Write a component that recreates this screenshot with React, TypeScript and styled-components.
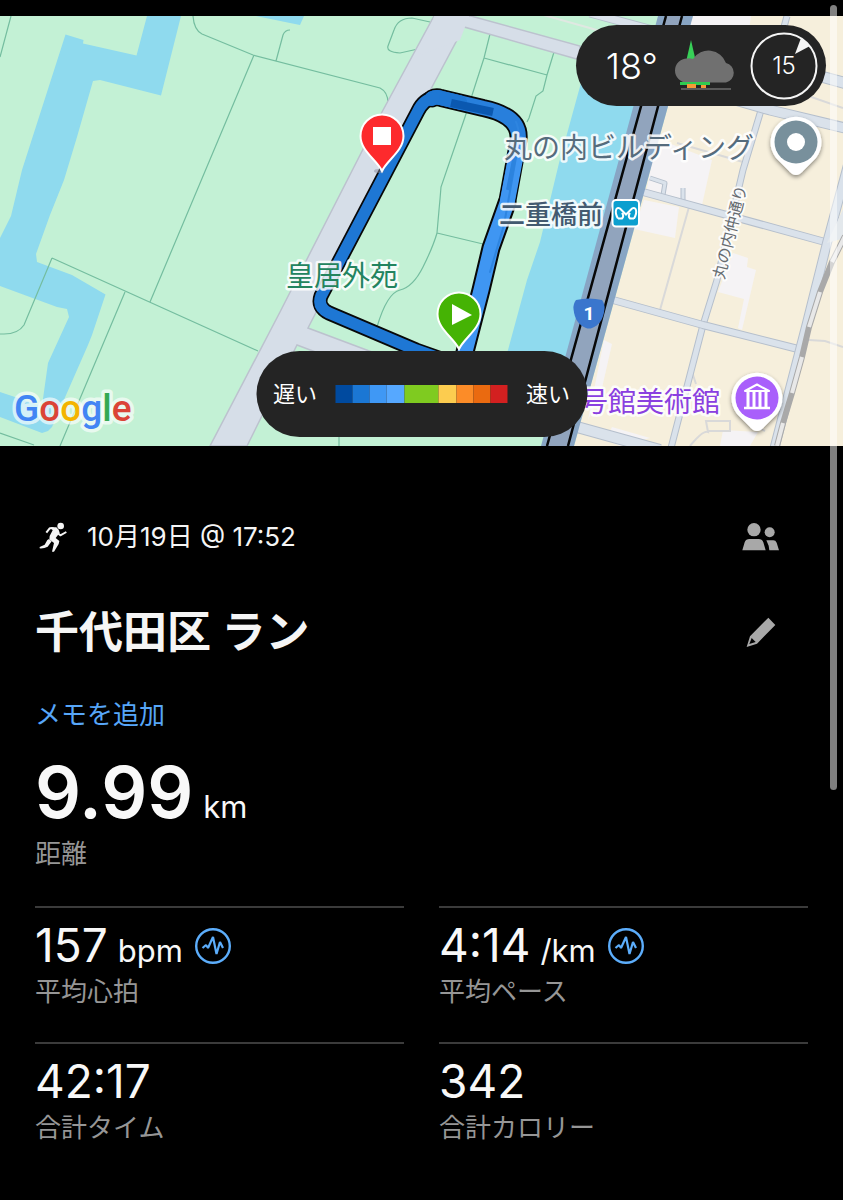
import React from 'react';
import styled, { createGlobalStyle } from 'styled-components';

const GlobalStyle = createGlobalStyle`
  *, *::before, *::after { box-sizing: border-box; }
  body {
    margin: 0;
    background: #000;
    color: #f5f5f5;
    font-family: Inter, "Noto Sans CJK JP", sans-serif;
  }
`;

const Page = styled.main`
  position: relative;
  min-height: 100vh;
  padding-top: 16px;
  padding-bottom: 36px;
  background: #000;
`;

const ScrollThumb = styled.div`
  position: absolute;
  top: 5px;
  right: 6px;
  width: 7px;
  height: 785px;
  border-radius: 4px;
  background: rgba(255, 255, 255, 0.5);
`;

const MapArea = styled.section`
  position: relative;
  overflow: hidden;
`;

const MapSvg = styled.svg`
  display: block;
  width: 100%;
  height: auto;
`;

const Pill = styled.div`
  position: absolute;
  display: flex;
  align-items: center;
  border-radius: 44px;
  background: #242424;
  color: #fff;
`;

const WeatherPill = styled(Pill)`
  top: 9px;
  right: 17px;
  height: 81px;
  padding: 0 8px 0 30px;
  gap: 14px;
`;

const LegendPill = styled(Pill)`
  bottom: 9px;
  left: 50%;
  height: 86px;
  padding: 0 17px;
  gap: 18px;
  transform: translateX(-50%);
  font-size: 22px;
  line-height: 32px;
  white-space: nowrap;
`;

const Temperature = styled.span`
  font-size: 36px;
  line-height: 44px;
  font-weight: 300;
`;

const WeatherIcon = styled.svg`
  width: 64px;
  height: 54px;
`;

const WindDial = styled.div`
  display: grid;
  place-items: center;
  width: 68px;
  height: 68px;
  font-size: 24px;
  line-height: 32px;
  font-weight: 300;

  > * { grid-area: 1 / 1; }
`;

const ColorScale = styled.div`
  display: flex;
  width: 173px;
  height: 18px;
`;

const ColorStep = styled.span<{ $color: string; $span: number }>`
  flex: ${(p) => p.$span};
  background: ${(p) => p.$color};
`;

const Details = styled.section`
  padding: 66px 35px 0;
`;

const HeaderRow = styled.div`
  display: flex;
  align-items: center;
  justify-content: space-between;
  height: 50px;
`;

const TitleRow = styled(HeaderRow)`
  height: 64px;
  margin-top: 38px;
`;

const DateLine = styled.div`
  display: flex;
  align-items: center;
  gap: 20px;
  padding-left: 4px;
  font-size: 26px;
  line-height: 36px;
`;

const Title = styled.h1`
  margin: 0;
  font-size: 44px;
  line-height: 64px;
  font-weight: 700;
`;

const IconButton = styled.button`
  display: grid;
  place-items: center;
  width: 48px;
  height: 48px;
  margin-right: 23px;
  padding: 0;
  border: 0;
  background: none;
  color: #a8a8a8;
  cursor: pointer;
`;

const NoteButton = styled.button`
  display: block;
  margin: 33px 0 0;
  padding: 0;
  border: 0;
  background: none;
  color: #57a6f8;
  font: inherit;
  font-size: 26px;
  line-height: 36px;
  cursor: pointer;
`;

const Stat = styled.div`
  display: flex;
  flex-direction: column-reverse;
  justify-content: flex-end;
`;

const MainStat = styled(Stat)`
  gap: 4px;
`;

const StatCell = styled(Stat)`
  padding-top: 9px;
  border-top: 2px solid #3b3b3b;
`;

const StatGrid = styled.dl`
  display: grid;
  grid-template-columns: 1fr 1fr;
  gap: 32px 35px;
  margin: 34px 0 0;
`;

const Summary = styled.dl`
  margin: 19px 0 0;
`;

const StatLabel = styled.dt`
  color: #969696;
  font-size: 26px;
  line-height: 36px;
  font-weight: 400;
`;

const StatValue = styled.dd<{ $large?: boolean }>`
  display: flex;
  align-items: baseline;
  gap: 10px;
  height: ${(p) => (p.$large ? 80 : 57)}px;
  margin: 0;
  color: #f8f8f8;
  font-size: ${(p) => (p.$large ? 72 : 46)}px;
  line-height: ${(p) => (p.$large ? 80 : 57)}px;
  font-weight: ${(p) => (p.$large ? 600 : 400)};
`;

const Unit = styled.span`
  font-size: 31px;
  line-height: 40px;
  font-weight: 400;
`;

const InfoButton = styled.button`
  align-self: center;
  width: 36px;
  height: 36px;
  margin-left: 2px;
  padding: 0;
  border: 0;
  background: none;
  line-height: 0;
  cursor: pointer;
`;

const paceColors = [
  { color: '#004a9f', span: 1 },
  { color: '#1b77d4', span: 1 },
  { color: '#3f98f5', span: 1 },
  { color: '#56a8ff', span: 1 },
  { color: '#7fcb20', span: 2 },
  { color: '#fccc4f', span: 1 },
  { color: '#fc8c28', span: 1 },
  { color: '#ea6a10', span: 1 },
  { color: '#d32020', span: 1 },
];

const Road = ({ d, w, fill = '#dae2eb', edge = '#b5bfcc' }: { d: string; w: number; fill?: string; edge?: string }) => (
  <g fill="none" strokeLinejoin="round">
    <path d={d} stroke={edge} strokeWidth={w + 2} />
    <path d={d} stroke={fill} strokeWidth={w} />
  </g>
);

const MapLabel = styled.text`
  font-family: "Noto Sans CJK JP", sans-serif;
  paint-order: stroke;
  stroke: #fff;
  stroke-opacity: 0.85;
  stroke-linejoin: round;
`;

const pinShape = 'M0 35C-5 24-21.5 15-21.5 0A21.5 21.5 0 0 1 21.5 0C21.5 15 5 24 0 35Z';
const placePin = 'M0 33Q-4 33-8 28L-20 16A25.5 25.5 0 1 1 20 16L8 28Q4 33 0 33Z';
const routeWest = 'M434 98Q424 99 418 111L386 172L321 296Q317 307 329 313L416 350L450 362';
const routeNorth = 'M432 98.500Q436 96.500 441 98L483 108Q521 116 518.500 140L507 203';

function RouteMap() {
  return (
    <MapSvg viewBox="0 16 843 430" role="img" aria-label="ルートマップ">
      <defs>
        <filter id="pinShadow" x="-30%" y="-30%" width="160%" height="170%">
          <feDropShadow dx="0" dy="2" stdDeviation="2" floodColor="#000" floodOpacity="0.45" />
        </filter>
      </defs>
      <rect y="16" width="843" height="430" fill="#c3f1d5" />

      <g fill="#8fdaee">
        <path d="M147 16H181L161 95.500L100 80L93 81L77 137L64 180L50 215L36 254L37 262L72 275L105.500 294.500L92 335L88 345L52 427L48 431L42 433L0 417V392L42 406L48 363L69 317L67 309L57 307L0 286V238L11 216L22 170L65.500 34.500L83.500 40L83 43.500L136.500 55.500Z" />
        <path d="M256 16L290 23L300 25L304 16Z" />
        <path d="M590 50L559 163L540 242L527 280L508 350L490 400H558L604 233L650 50Z" />
      </g>

      <g fill="none" stroke="#74bd9f" strokeWidth="1.200">
        <path d="M11 16L0 57M193 16Q194 30 202 34L253 55L380 88Q388 92 388 103M276 61L283 35Q285 30 290 30M254 55L150 302M52 258L258 351M52 258L24 325Q18 334 4 334H0M125 292L60 446M0 433L34 445" />
        <path d="M430 22L412 18Q398 18 394 30L388 46Q386 52 400 53L418 49M490 34L484 58L465 117L441 187Q440 200 439 210L437 233Q433 247 423 267T400 290T377 327M484 58L547 75M554 52L547 75L543 91L536 96L529 118L527 122M437 233L483 244M339 436V446" />
      </g>

      <path d="M434 16H471L580 46V60L464 27L432 87L308 328L420 370L416 390L297 345L247 446H210L280 312L382 112Z" fill="#d6dee8" stroke="#bcc2ce" strokeWidth="1.500" />
      <path d="M435 14H470L460 40L420 55Z" fill="#d6dee8" />
      <path d="M540 14L643 43" stroke="#e0e8e2" strokeWidth="2" />
      <Road d="M590 13L660 32" w={7} />

      <path d="M693 16H843V446H574Z" fill="#f6efdc" />
      <g fill="#f5f3f5">
        <path d="M693 16H751L749 30H688Z" />
        <path d="M653 157L666 142L712 160L702 205L646 193Z" />
        <path d="M644 200L679 207L675 238L634 229Z" />
        <path d="M733 253L748 258L747 267L756 270L742 330L738 328L744 299L718 292Z" />
        <path d="M604 340L612 344L602 388L588 420Z" />
        <path d="M723 430L758 432L750 446H720Z" />
        <path d="M612 427L650 438L620 446L606 440Z" />
      </g>
      <g fill="none" stroke="#d9d9d9" strokeWidth="2">
        <path d="M689 207L660 310M677 143L743 162M809 340L825 341L843 347M690 446Q703 430 708 432L706 421L730 421V431H708M745 421L765 431M780 86L843 108M692 372L696 384" />
      </g>
      <Road d="M787 16L762 107L743 170L717 280L703 325L671 448" w={5} />
      <Road d="M683 203V188M663 195L665 183L650 178" w={3} />
      <Road d="M643 192L825 242" w={6} />
      <Road d="M613 300L703 325L798 349" w={6} />
      <Road d="M577 427L660 450" w={10} />
      <Road d="M700 90L770 110L845 128" w={9} />
      <Road d="M700 40L823 77L845 83" w={10} />
      <Road d="M848 165L827 243L807 323L774 450" w={8} />
      <path d="M827 243L845 205L845 238Z" fill="#e3e8ec" />

      <path d="M845 236L832 262L820 292L809 327L802 357L792 393L783 423L777 446" fill="none" stroke="#a9a9a9" strokeWidth="6" />
      <path d="M845 236L832 262M820 292L809 327M802 357L792 393M783 423L777 446" fill="none" stroke="#e8e8e8" strokeWidth="4" />

      <path d="M658 16H693L574 446H541Z" fill="#88a5c4" />
      <path d="M666 16H682L568 446H547Z" fill="#91a4bd" />
      <path d="M666 16L547 446M682 16L568 446" stroke="#080808" strokeWidth="2.500" />

      <g fill="none" strokeLinejoin="round" strokeLinecap="round">
        <path d="M507 203L491 248L481 290L465 352" stroke="#080808" strokeWidth="19" />
        <path d={routeNorth} stroke="#080808" strokeWidth="18" />
        <path d={routeWest} stroke="#080808" strokeWidth="15" />
        <path d={routeNorth} stroke="#287fdc" strokeWidth="14.500" />
        <path d="M518.500 143L507 203L491 248L481 290L465 352" stroke="#3f96f2" strokeWidth="15" />
        <path d="M432 98.500Q436 96.500 441 98L460 102.500" stroke="#1e77d4" strokeWidth="14.500" />
        <path d={routeWest} stroke="#1e77d4" strokeWidth="11.500" />
        <path d="M451 103L493 112" stroke="#0b58b0" strokeWidth="8" strokeLinecap="butt" />
        <path d="M516 122Q520 130 518 146L504 225L490 272" stroke="#2e85e0" strokeWidth="2" />
        <path d="M515 155L508 190" stroke="#2c83de" strokeWidth="4" strokeLinecap="butt" />
      </g>

      <MapLabel x="286" y="286" fontSize="28" fill="#23845f" strokeWidth="5">皇居外苑</MapLabel>
      <MapLabel x="504" y="158" fontSize="28" fill="#566c7d" strokeWidth="5">丸の内ビルディング</MapLabel>
      <MapLabel x="499" y="224" fontSize="26" fontWeight="500" fill="#435a70" strokeWidth="5">二重橋前</MapLabel>
      <MapLabel x="720" y="412" fontSize="28" textAnchor="end" fill="#8a3fe0" strokeWidth="5">号館美術館</MapLabel>
      <MapLabel transform="translate(724 280) rotate(-76)" fontSize="16" fill="#666b70" strokeWidth="4">丸の内仲通り</MapLabel>

      <g transform="translate(382 136)">
        <ellipse cx="-3" cy="35" rx="5" ry="2" fill="#889" opacity="0.5" />
        <path d={pinShape} fill="#fd2a2d" stroke="#fff" strokeWidth="2" />
        <rect x="-9" y="-9" width="18" height="18" fill="#fff" />
      </g>
      <g transform="translate(459 314)">
        <path d={pinShape} fill="#45b304" stroke="#fff" strokeWidth="2" />
        <path d="M-7-10L13 1L-7 11Z" fill="#fff" />
      </g>

      <g transform="translate(796 142)">
        <path d={placePin} fill="#fff" filter="url(#pinShadow)" />
        <circle r="21.500" fill="#78909c" />
        <circle r="9" fill="#fff" />
      </g>
      <g transform="translate(757 398)">
        <path d={placePin} fill="#fff" filter="url(#pinShadow)" />
        <circle r="21.500" fill="#a95ffb" />
        <path d="M-12-7L0-13.500L12-7Z" fill="none" stroke="#fff" strokeWidth="2" strokeLinejoin="round" />
        <path d="M-9-6V9M-3-6V9M3-6V9M9-6V9" stroke="#fff" strokeWidth="3" />
        <path d="M-13 10H13" stroke="#fff" strokeWidth="2.500" />
      </g>

      <rect x="612.500" y="200" width="26.500" height="26.500" rx="3.500" fill="#0c9fcf" stroke="#fff" strokeWidth="2" />
      <path d="M618 218.500C614 212 616 206 620 208.500L626 214.500L632 208.500C636 206 638 212 634 218.500M618 218.500H622C623.500 217 623.500 215 622 213M634 218.500H630C628.500 217 628.500 215 630 213" fill="none" stroke="#fff" strokeWidth="2" />

      <path d="M576 300Q589 297 602 300Q605 304 604.500 309Q603 324 592 328Q589 329 586 328Q575 324 573.500 309Q573 304 576 300Z" fill="#3a76cd" />
      <text x="589" y="320" textAnchor="middle" fontFamily="Roboto, sans-serif" fontSize="19" fontWeight="700" fill="#fff">1</text>

      <text x="14" y="421" fontFamily="Roboto, sans-serif" fontSize="37" fontWeight="500" stroke="#fff" strokeOpacity="0.65" strokeWidth="7" strokeLinejoin="round" paintOrder="stroke">
        <tspan fill="#4285f4">G</tspan><tspan fill="#db4437">o</tspan><tspan fill="#f4b400">o</tspan><tspan fill="#4285f4">g</tspan><tspan fill="#34a853">l</tspan><tspan fill="#db4437">e</tspan>
      </text>
    </MapSvg>
  );
}

function PulseIcon() {
  return (
    <svg width="36" height="36" viewBox="0 0 36 36" fill="none" stroke="#5cadfb" aria-hidden="true">
      <circle cx="18" cy="18" r="16.800" strokeWidth="2.400" />
      <path d="M7.500 20L11 17L13 20L18 9L21.500 26L25 14L28 20" strokeWidth="2.200" strokeLinejoin="bevel" />
    </svg>
  );
}

function RunnerIcon() {
  return (
    <svg width="28" height="30" viewBox="116 94 84 90" fill="none" stroke="#f5f5f5" strokeLinejoin="round" aria-hidden="true">
      <circle cx="181" cy="106" r="10" fill="#f5f5f5" stroke="none" />
      <path d="M150 110H168L175 117L178 126L166 142L177 151L175 160L161 183H155L161 157L147 146L148 136L157 119Z" fill="#f5f5f5" stroke="none" />
      <path d="M160 113L148 113L138 126M169 125L180 134L198 124" strokeWidth="6" />
      <path d="M146 145L154 152L142 168Q131 174 118 173V169L133 162L141 148Z" fill="#f5f5f5" stroke="none" />
    </svg>
  );
}

function PeopleIcon() {
  return (
    <svg width="38" height="30" viewBox="67 68 114 90" fill="currentColor" aria-hidden="true">
      <circle cx="103" cy="91" r="20" />
      <circle cx="150" cy="99" r="15" />
      <path d="M68 153L75 129Q79 119 89 119H117Q127 119 131 129L138 153ZM140 123H161Q168 123 171 130L178 153H149L147 139Z" />
    </svg>
  );
}

function PencilIcon() {
  return (
    <svg width="30" height="30" viewBox="78 350 90 90" fill="currentColor" fillRule="evenodd" aria-hidden="true">
      <path d="M145 352L166 374L111 430L80 440L90 408ZM95 413L88 431L107 425Z" />
    </svg>
  );
}

type StatItem = { label: string; value: string; unit?: string; info?: boolean };

const stats: StatItem[] = [
  { label: '平均心拍', value: '157', unit: 'bpm', info: true },
  { label: '平均ペース', value: '4:14', unit: '/km', info: true },
  { label: '合計タイム', value: '42:17' },
  { label: '合計カロリー', value: '342' },
];

export default function App() {
  return (
    <>
      <GlobalStyle />
      <Page>
        <MapArea>
          <RouteMap />
          <WeatherPill>
            <Temperature>18°</Temperature>
            <WeatherIcon viewBox="0 0 64 54" aria-hidden="true">
              <path d="M19 1L24 23H14Z" fill="#38d058" />
              <path d="M15 43.500A12 12 0 0 1 15 19.500Q18 19 21 20A18.500 18.500 0 0 1 54 24A10 10 0 0 1 54 43.500Z" fill="#707070" />
              <path d="M8 43H38V46H8Z" fill="#2fcb50" />
              <path d="M15 45H24V49H15ZM29 46H34V49H29Z" fill="#f59a36" />
              <path d="M9 50H59" stroke="#5a5a5a" strokeWidth="2" />
            </WeatherIcon>
            <WindDial>
              <svg width="68" height="68" viewBox="0 0 68 68" fill="none" aria-hidden="true">
                <circle cx="34" cy="34" r="32.500" stroke="#f5f5f5" strokeWidth="2" />
                <path d="M51 6L60 14L45 22Z" fill="#f5f5f5" />
              </svg>
              <span>15</span>
            </WindDial>
          </WeatherPill>
          <LegendPill>
            <span>遅い</span>
            <ColorScale>
              {paceColors.map((step) => (
                <ColorStep key={step.color} $color={step.color} $span={step.span} />
              ))}
            </ColorScale>
            <span>速い</span>
          </LegendPill>
        </MapArea>

        <Details>
          <HeaderRow>
            <DateLine>
              <RunnerIcon />
              <span>10月19日 @ 17:52</span>
            </DateLine>
            <IconButton type="button" aria-label="公開設定">
              <PeopleIcon />
            </IconButton>
          </HeaderRow>
          <TitleRow>
            <Title>千代田区 ラン</Title>
            <IconButton type="button" aria-label="編集">
              <PencilIcon />
            </IconButton>
          </TitleRow>
          <NoteButton type="button">メモを追加</NoteButton>

          <Summary>
            <MainStat>
              <StatLabel>距離</StatLabel>
              <StatValue $large>
                9.99 <Unit>km</Unit>
              </StatValue>
            </MainStat>
          </Summary>

          <StatGrid>
            {stats.map((s) => (
              <StatCell key={s.label}>
                <StatLabel>{s.label}</StatLabel>
                <StatValue>
                  {s.value}
                  {s.unit && <Unit>{s.unit}</Unit>}
                  {s.info && (
                    <InfoButton type="button" aria-label={`${s.label}の詳細`}>
                      <PulseIcon />
                    </InfoButton>
                  )}
                </StatValue>
              </StatCell>
            ))}
          </StatGrid>
        </Details>
        <ScrollThumb />
      </Page>
    </>
  );
}
